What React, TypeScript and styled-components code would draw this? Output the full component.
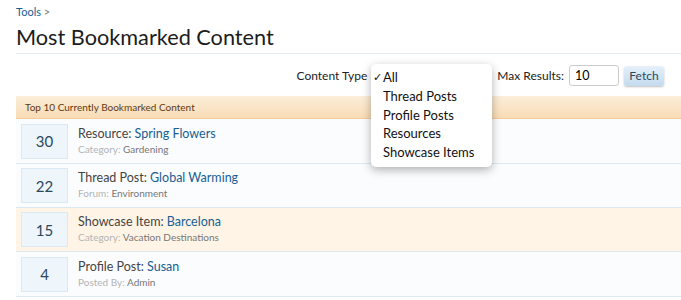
import React from 'react';
import styled, { createGlobalStyle } from 'styled-components';

const GlobalStyle = createGlobalStyle`
  body {
    margin: 0;
    background: #ffffff;
    font-family: Lato, "Liberation Sans", sans-serif;
    color: #222;
    overflow: hidden;
  }
`;

const Page = styled.div`
  padding: 5px 0 0 16px;
  width: 665px;
`;

const Breadcrumb = styled.div`
  font-size: 11px;
  color: #777;
  height: 14px;
  line-height: 14px;
  a {
    color: #176093;
    text-decoration: none;
  }
`;

const Title = styled.h1`
  margin: 5px 0 0;
  font-size: 21.7px;
  font-weight: normal;
  color: #1c1c1c;
  line-height: 26px;
  padding-bottom: 3px;
  border-bottom: 1px solid #e3edf2;
`;

const Controls = styled.form`
  position: relative;
  display: flex;
  justify-content: flex-end;
  align-items: center;
  padding: 11px 17px 10px 0;
  font-size: 12px;
  color: #222;
`;

const Label = styled.span``;

const FakeSelect = styled.div`
  width: 121px;
  height: 20px;
  margin: 0 6px 0 3px;
`;

const Input = styled.input`
  width: 50px;
  height: 21px;
  box-sizing: border-box;
  margin-left: 5px;
  border: 1px solid #ccc;
  border-radius: 3px;
  padding: 0 5px;
  font: inherit;
  font-size: 12.5px;
  color: #000;
`;

const Button = styled.button`
  height: 20px;
  width: 40px;
  box-sizing: border-box;
  margin-left: 5px;
  padding: 0;
  border: none;
  border-radius: 3px;
  background: linear-gradient(#e5f0fa, #c4dbee);
  box-shadow: 0 1px 2px rgba(0, 0, 0, 0.25);
  font: inherit;
  font-size: 12px;
  color: #2b485c;
`;

const Menu = styled.ul`
  position: absolute;
  left: 355px;
  top: 10px;
  width: 121px;
  height: 103px;
  box-sizing: border-box;
  margin: 0;
  padding: 4px 0 0;
  list-style: none;
  background: #fff;
  border-radius: 5px;
  box-shadow: 0 3px 10px rgba(0, 0, 0, 0.3);
  z-index: 5;
  font-size: 13px;
`;

const MenuItem = styled.li`
  position: relative;
  padding-left: 12px;
  height: 18.8px;
  line-height: 18.8px;
  color: #111;
`;

const Check = styled.span`
  position: absolute;
  left: 2px;
  top: 0;
  font-size: 11px;
`;

const SectionHeader = styled.div`
  height: 22px;
  line-height: 22px;
  padding-left: 9px;
  font-size: 10px;
  color: #5e3a12;
  background: linear-gradient(#fbeed9, #f9dcb6);
  border-bottom: 1px solid #f5cc9b;
  width: 700px;
`;

const List = styled.ol`
  margin: 0;
  padding: 0;
  list-style: none;
  width: 700px;
`;

const Row = styled.li<{ $hot?: boolean }>`
  display: flex;
  align-items: center;
  height: 44px;
  box-sizing: border-box;
  border-bottom: 1px solid #dde9f0;
  background: ${(p) => (p.$hot ? '#fff4e6' : '#fbfcfe')};
  &:first-child {
    height: 45px;
  }
  &:last-child {
    height: 45px;
  }
`;

const Count = styled.div`
  width: 47px;
  height: 35px;
  margin: 0 10px 0 5px;
  box-sizing: border-box;
  display: flex;
  align-items: center;
  justify-content: center;
  background: #eef5fb;
  border: 1px solid #dbe9f4;
  font-size: 15px;
  color: #2b485c;
`;

const Info = styled.div`
  display: flex;
  flex-direction: column;
  gap: 2px;
  margin-top: -2px;
`;

const ItemTitle = styled.div`
  font-size: 12.5px;
  color: #444;
  a {
    color: #176093;
    text-decoration: none;
  }
`;

const Meta = styled.div`
  font-size: 10px;
  color: #b4b4b4;
  b {
    font-weight: normal;
    color: #777;
  }
`;

const rows = [
  { count: 30, kind: 'Resource', name: 'Spring Flowers', metaLabel: 'Category', meta: 'Gardening' },
  { count: 22, kind: 'Thread Post', name: 'Global Warming', metaLabel: 'Forum', meta: 'Environment' },
  { count: 15, kind: 'Showcase Item', name: 'Barcelona', metaLabel: 'Category', meta: 'Vacation Destinations', hot: true },
  { count: 4, kind: 'Profile Post', name: 'Susan', metaLabel: 'Posted By', meta: 'Admin' },
];

const options = ['All', 'Thread Posts', 'Profile Posts', 'Resources', 'Showcase Items'];

const App: React.FC = () => {
  return (
    <Page>
      <GlobalStyle />
      <Breadcrumb>
        <a href="#">Tools</a> &gt;
      </Breadcrumb>
      <Title>Most Bookmarked Content</Title>

      <Controls onSubmit={(e) => e.preventDefault()}>
        <Label>Content Type</Label>
        <FakeSelect />
        <Label>Max Results:</Label>
        <Input defaultValue="10" />
        <Button type="submit">Fetch</Button>
        <Menu>
          {options.map((o, i) => (
            <MenuItem key={o}>
              {i === 0 && <Check>✓</Check>}
              {o}
            </MenuItem>
          ))}
        </Menu>
      </Controls>

      <SectionHeader>Top 10 Currently Bookmarked Content</SectionHeader>
      <List>
        {rows.map((r) => (
          <Row key={r.name} $hot={r.hot}>
            <Count>{r.count}</Count>
            <Info>
              <ItemTitle>
                {r.kind}: <a href="#">{r.name}</a>
              </ItemTitle>
              <Meta>
                {r.metaLabel}: <b>{r.meta}</b>
              </Meta>
            </Info>
          </Row>
        ))}
      </List>
    </Page>
  );
};

export default App;
